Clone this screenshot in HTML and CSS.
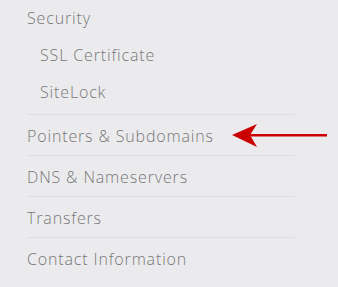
FILE: index.html
```html
<!DOCTYPE html>
<html lang="en">
<head>
    <meta charset="UTF-8">
    <meta name="viewport" content="width=device-width, initial-scale=1.0">
    <title>Domain Menu</title>
    <link rel="stylesheet" href="styles.css">
</head>
<body>
    <div class="menu">
        <div class="group">
            <div class="item">Security</div>
            <div class="item sub">SSL Certificate</div>
            <div class="item sub last">SiteLock</div>
        </div>
        <div class="row">
            <span>Pointers &amp; Subdomains</span>
            <svg class="arrow" width="96" height="24" viewBox="0 0 96 24">
                <path d="M0 12 L25 1 L18 12 L25 24 Z" fill="#cc0000"/>
                <rect x="18" y="11" width="77" height="2.5" fill="#cc0000"/>
            </svg>
        </div>
        <div class="row">DNS &amp; Nameservers</div>
        <div class="row">Transfers</div>
        <div class="row">Contact Information</div>
    </div>
</body>
</html>
```

FILE: styles.css
```css
body {
    margin: 0;
    padding: 0;
    background-color: #ebebed;
    font-family: "Open Sans", sans-serif;
    font-weight: 300;
    font-size: 16px;
    letter-spacing: 0.85px;
    color: #777777;
}
.menu {
    width: 268px;
    margin-left: 27px;
}
.group {
    padding-top: 6px;
}
.item {
    height: 37px;
    line-height: 24px;
}
.item.last {
    height: 34px;
}
.item.sub {
    padding-left: 13px;
}
.row {
    position: relative;
    height: 41px;
    padding-top: 2px;
    line-height: 38px;
    border-top: 1px solid #dfdfe1;
    box-sizing: border-box;
}
.arrow {
    position: absolute;
    left: 205px;
    top: 8px;
}
```
